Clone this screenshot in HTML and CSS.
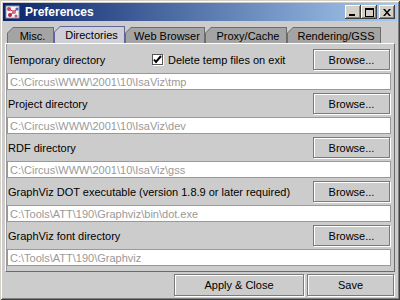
FILE: index.html
```html
<!DOCTYPE html>
<html>
<head>
<meta charset="utf-8">
<link rel="stylesheet" href="styles.css">
</head>
<body>
<div class="window">
  <div class="titlebar">
    <svg class="appicon" width="16" height="16" viewBox="0 0 16 16">
      <rect x="1" y="2" width="13" height="12" fill="#f4f4f4" stroke="#9a9aa8"/>
      <line x1="4" y1="5" x2="9" y2="8" stroke="#c03040"/>
      <line x1="9" y1="8" x2="5" y2="11" stroke="#c03040"/>
      <line x1="9" y1="8" x2="12" y2="5" stroke="#4050a0"/>
      <circle cx="4" cy="5" r="2" fill="#d04060"/>
      <circle cx="9" cy="8" r="2" fill="#e06080"/>
      <circle cx="5" cy="11" r="2" fill="#c02040"/>
      <circle cx="12" cy="5" r="1.6" fill="#5060c0"/>
      <circle cx="11" cy="12" r="1.5" fill="#d05070"/>
    </svg>
    <span class="title">Preferences</span>
    <div class="wbtns">
      <span class="wbtn"><svg width="8" height="7" viewBox="0 0 8 7"><rect x="0" y="5" width="6" height="2" fill="#000"/></svg></span>
      <span class="wbtn"><svg width="9" height="9" viewBox="0 0 9 9"><rect x="0.5" y="0.5" width="8" height="8" fill="none" stroke="#000"/><rect x="0" y="0" width="9" height="2" fill="#000"/></svg></span>
      <span class="wbtn close"><svg width="8" height="7" viewBox="0 0 8 7"><path d="M0 0h2l2 2.5L6 0h2L5 3.5 8 7H6L4 4.5 2 7H0l3-3.5z" fill="#000"/></svg></span>
    </div>
  </div>
  <div class="tabs">
    <div class="tab t-misc"><span>Misc.</span></div>
    <div class="tab sel t-dir"><span>Directories</span></div>
    <div class="tab t-web"><span>Web Browser</span></div>
    <div class="tab t-proxy"><span>Proxy/Cache</span></div>
    <div class="tab t-rend"><span>Rendering/GSS</span></div>
  </div>
  <div class="panel">
    <div class="row first">
      <span class="label">Temporary directory</span>
      <label class="check"><span class="box"><svg width="9" height="9" viewBox="0 0 9 9"><path d="M1 4.5l2 2.5 5-6" fill="none" stroke="#000" stroke-width="2"/></svg></span>Delete temp files on exit</label>
      <span class="btn browse">Browse...</span>
    </div>
    <div class="field">C:\Circus\WWW\2001\10\IsaViz\tmp</div>
    <div class="row">
      <span class="label">Project directory</span>
      <span class="btn browse">Browse...</span>
    </div>
    <div class="field">C:\Circus\WWW\2001\10\IsaViz\dev</div>
    <div class="row">
      <span class="label">RDF directory</span>
      <span class="btn browse">Browse...</span>
    </div>
    <div class="field">C:\Circus\WWW\2001\10\IsaViz\gss</div>
    <div class="row">
      <span class="label">GraphViz DOT executable (version 1.8.9 or later required)</span>
      <span class="btn browse">Browse...</span>
    </div>
    <div class="field">C:\Tools\ATT\190\Graphviz\bin\dot.exe</div>
    <div class="row">
      <span class="label">GraphViz font directory</span>
      <span class="btn browse">Browse...</span>
    </div>
    <div class="field">C:\Tools\ATT\190\Graphviz</div>
  </div>
  <div class="buttonbar">
    <span class="btn apply">Apply &amp; Close</span>
    <span class="btn save">Save</span>
  </div>
</div>
</body>
</html>
```
FILE: styles.css
```css
* { box-sizing: border-box; }
html, body { margin: 0; padding: 0; background: #cccccc; }
body { width: 400px; height: 300px; overflow: hidden; font-family: "Liberation Sans", Arial, sans-serif; font-size: 11px; color: #000; }

.window {
  width: 400px; height: 300px;
  background: #cccccc;
  padding: 3px 3px 3px 3px;
  display: flex; flex-direction: column;
  box-shadow: inset 1px 1px 0 #d4d0c8, inset -1px -1px 0 #404040, inset 2px 2px 0 #ffffff, inset -2px -2px 0 #808080;
}

.titlebar {
  height: 18px; flex: none;
  background: linear-gradient(to right, #0a246a, #a6caf0);
  display: flex; align-items: center;
  padding: 0 2px 0 2px;
}
.appicon { display: block; flex: none; }
.title { color: #fff; font-weight: bold; font-size: 12px; margin-left: 4px; font-family: "Liberation Sans", Arial, sans-serif; }
.wbtns { margin-left: auto; display: flex; align-items: center; }
.wbtn {
  width: 16px; height: 14px; background: #d4d0c8;
  display: flex; align-items: center; justify-content: center;
  box-shadow: inset -1px -1px 0 #404040, inset 1px 1px 0 #ffffff, inset -2px -2px 0 #808080;
}
.wbtn.close { margin-left: 2px; }

.tabs {
  height: 22px; flex: none;
  display: flex; align-items: flex-end;
  padding-left: 4px;
}
.tab {
  height: 16px;
  background: #6c6c6c;
  padding: 1px 1px 0 1px;
  clip-path: polygon(0 6px, 6px 0, 100% 0, 100% 100%, 0 100%);
  margin-right: 0;
}
.tab span {
  display: flex; align-items: center; justify-content: center;
  height: 100%;
  background: #a4a4a4;
  clip-path: polygon(0 5px, 5px 0, 100% 0, 100% 100%, 0 100%);
  padding: 0 0 0 4px;
  white-space: nowrap;
}
.tab.sel { height: 17px; background: #63639c; padding: 1px 1px 0 1px; }
.tab.sel span { background: #cfcfd8; }
.t-misc { width: 47px; }
.t-dir { width: 71px; }
.t-web { width: 80px; }
.t-proxy { width: 82px; }
.t-rend { width: 94px; }

.panel {
  height: 229px; flex: none;
  margin: 0 2px;
  border: 1px solid;
  border-color: #ffffff #6a6a6a #6a6a6a #ffffff;
  box-shadow: inset 1px 0 0 #9a9a9a;
  padding: 5px 3px 0 1px;
  display: flex; flex-direction: column;
}
.row {
  height: 21px; flex: none;
  display: flex; align-items: center;
}
.row .label { padding-left: 1px; flex: 1; white-space: nowrap; }
.row.first .label { flex: none; width: 145px; }
.check { display: flex; align-items: center; flex: 1; white-space: nowrap; }
.box {
  width: 11px; height: 11px; background: #fff;
  border: 1px solid #555; margin-right: 5px;
  display: flex; align-items: center; justify-content: center;
  box-shadow: 1px 1px 0 #fff;
}
.field {
  height: 17px; flex: none;
  margin: 3px 0 3px 0;
  background: #fff;
  border: 1px solid #999;
  color: #999;
  padding: 0 0 0 2px;
  display: flex; align-items: center;
  white-space: nowrap;
}
.btn {
  display: flex; align-items: center; justify-content: center;
  background: #cccccc;
  border: 1px solid #7a7a7a;
  box-shadow: inset 1px 1px 0 #ffffff, 1px 1px 0 #ffffff;
  white-space: nowrap;
}
.browse { width: 77px; height: 21px; flex: none; margin-right: 1px; }

.buttonbar {
  flex: 1;
  display: flex; justify-content: flex-end; align-items: stretch;
  padding: 2px 3px 1px 0;
}
.apply { width: 130px; margin-right: 3px; }
.save { width: 87px; }
```
